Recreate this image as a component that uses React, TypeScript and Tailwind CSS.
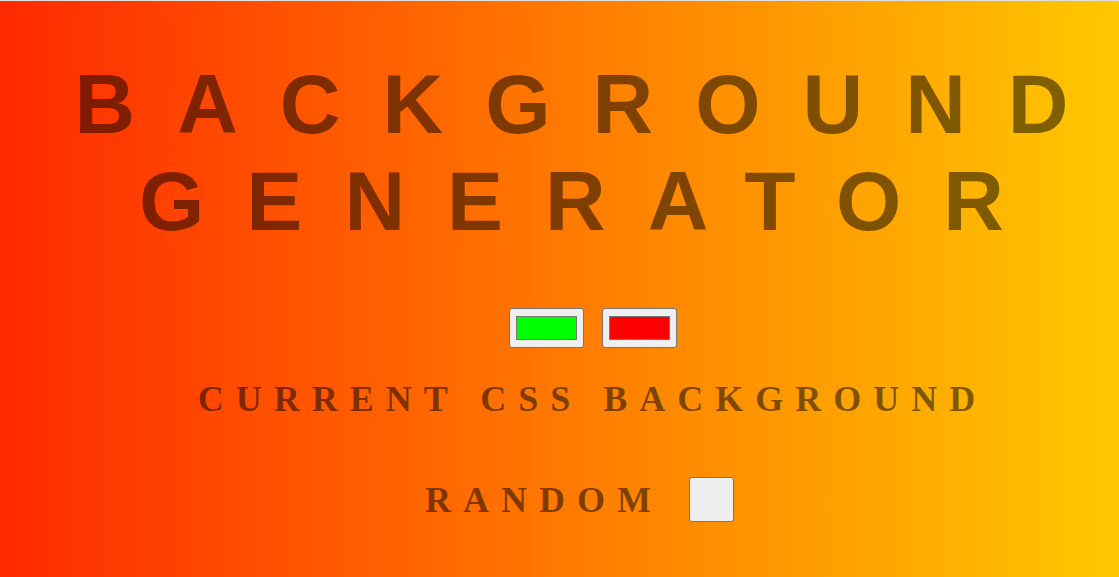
import { useState } from "react";

const swatch =
  "h-10 w-[75px] rounded-[3px] border border-[#767676] bg-[#efefef] px-1 py-[3px]";

export default function App() {
  const [first, setFirst] = useState("#00ff00");
  const [second, setSecond] = useState("#ff0000");

  return (
    <main className="min-h-screen border-t border-[#e0e0e0] bg-linear-to-r/srgb from-[#ff2a00] to-[#ffc800] pl-[66px] text-center uppercase text-black/50">
      <h1 className="pt-[55px] font-['Liberation_Sans',Arial,sans-serif] text-[84px] leading-[97px] font-bold tracking-[42px]">
        Background Generator
      </h1>
      <div className="mt-[58px] flex justify-center gap-[18px]">
        <input type="color" aria-label="First colour" className={swatch} value={first} onChange={(e) => setFirst(e.target.value)} />
        <input type="color" aria-label="Second colour" className={swatch} value={second} onChange={(e) => setSecond(e.target.value)} />
      </div>
      <h2 className="mt-[31px] font-['Liberation_Serif',serif] text-[36px] leading-[40px] font-bold tracking-[12px]">
        Current CSS Background
      </h2>
      <div className="mt-[58px] mr-[26px] flex items-center justify-center gap-[26px] font-['Liberation_Serif',serif] text-[36px] leading-[40px] font-bold tracking-[12px]">
        <span id="random-label">Random</span>
        <button type="button" aria-labelledby="random-label" className="size-[45px] rounded-[3px] border border-[#767676] bg-[#efefef]" />
      </div>
    </main>
  );
}
